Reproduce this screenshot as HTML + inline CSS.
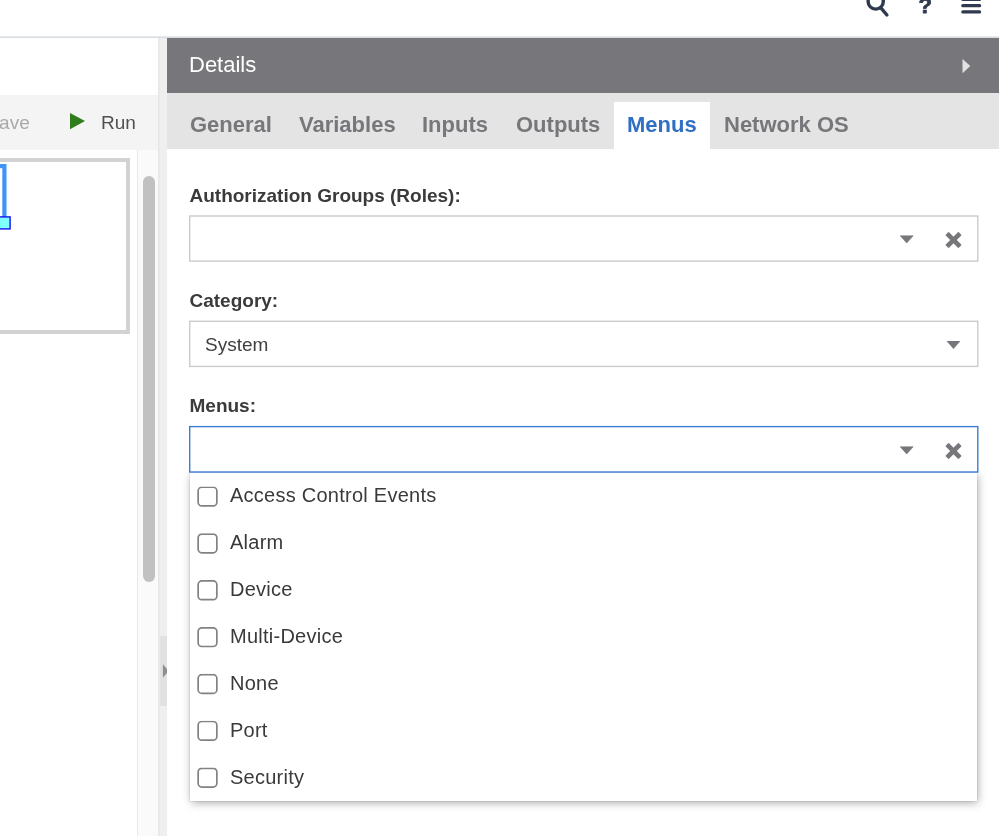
<!DOCTYPE html>
<html><head><meta charset="utf-8">
<style>
html,body{margin:0;padding:0;}
body{width:999px;height:836px;overflow:hidden;background:#fff;font-family:"Liberation Sans",sans-serif;position:relative;color:#404040;}
.abs{position:absolute;}
#topline{left:0;top:36px;width:999px;height:2px;background:linear-gradient(#eef1f3,#cfd6db);}
#toolbar{left:0;top:95px;width:158px;height:55px;background:#f4f4f4;}
#save{left:-13.6px;top:112px;font-size:19px;color:#a9a9a9;line-height:22px;}
#run{left:101px;top:112px;font-size:19px;color:#505050;line-height:22px;}
#outline{left:-10px;top:158px;width:132px;height:168px;border:4px solid #d2d2d2;background:#fff;}
#bluerect{left:-10px;top:164px;width:13px;height:52px;border:3px solid #3f97fb;border-bottom:none;}
#handle{left:-3px;top:217px;width:13px;height:11px;background:#8ff;border:1px solid #1433e6;}
#lane{left:137px;top:150px;width:21px;height:686px;background:#fafafa;border-left:1px solid #e9e9e9;box-sizing:border-box;}
#thumb{left:143px;top:176px;width:11.5px;height:406px;border-radius:6px;background:#c1c1c1;}
#split{left:158px;top:38px;width:9px;height:798px;background:#efefef;box-shadow:inset 1.4px 0 0 #e6e6e6;}
#splith{left:160px;top:635.8px;width:7px;height:69.8px;background:#e1e1e1;}
#hdr{left:167px;top:38px;width:832px;height:55px;background:#77767a;}
#hdrt{left:189px;top:52px;font-size:22px;color:#fff;line-height:26px;}
#tabs{left:167px;top:93px;width:832px;height:56px;background:#e4e4e4;}
.tab{position:absolute;top:111px;font-size:22px;font-weight:bold;color:#77767a;line-height:28px;white-space:nowrap;}
#acttab{left:614px;top:102px;width:96px;height:47px;background:#fff;}
.lbl{position:absolute;left:189.5px;transform:translateY(-0.5px);font-size:19px;font-weight:bold;color:#3a3a3a;line-height:22px;white-space:nowrap;}
.box{position:absolute;left:189px;width:789px;height:47px;box-sizing:border-box;border:1px solid #cfcfcf;background:#fff;}
#dd{left:189.75px;top:472.6px;width:787.6px;height:328.4px;background:#fff;box-shadow:0 0 0 .7px rgba(0,0,0,.08),1.3px 1.5px 9px rgba(0,0,0,.36);}
.it{position:absolute;left:230px;font-size:20px;letter-spacing:.25px;color:#3a3a3a;line-height:24px;white-space:nowrap;}
</style></head><body><div id="wrap" style="position:absolute;left:0;top:0;width:999px;height:836px;will-change:transform;">
<div class="abs" id="topline"></div>
<svg class="abs" style="left:860px;top:0" width="139" height="24" viewBox="860 0 139 24">
 <circle cx="875.7" cy="1.5" r="7.6" fill="none" stroke="#2f3a4e" stroke-width="3.4"/>
 <line x1="881.3" y1="8.3" x2="886.9" y2="15" stroke="#2f3a4e" stroke-width="3.4" stroke-linecap="round"/>
 <text x="918.4" y="13" font-family="Liberation Sans, sans-serif" font-size="22" font-weight="bold" fill="#2f3a4e" stroke="#2f3a4e" stroke-width="0.8" stroke-linejoin="round">?</text>
 <rect x="961.2" y="-2.3" width="20" height="3.3" rx="1.6" fill="#2f3a4e"/>
 <rect x="961.2" y="4" width="20" height="3.3" rx="1.6" fill="#2f3a4e"/>
 <rect x="961.2" y="10.2" width="20" height="3.4" rx="1.7" fill="#2f3a4e"/>
</svg>

<div class="abs" id="toolbar"></div>
<div class="abs" id="save">Save</div>
<svg class="abs" style="left:69px;top:112px" width="18" height="18"><polygon points="1,1 16,9 1,17.3" fill="#2f7d1c"/></svg>
<div class="abs" id="run">Run</div>
<div class="abs" id="lane"></div>
<div class="abs" id="outline"></div>
<svg class="abs" style="left:0;top:160px" width="20" height="75"><rect x="-10" y="6.1" width="14.4" height="60" fill="none" stroke="#3e95f7" stroke-width="4.2"/><rect x="-5" y="56.9" width="15.1" height="12" fill="#80ffff" stroke="#1212ee" stroke-width="1.4"/></svg>
<div class="abs" id="thumb"></div>
<div class="abs" id="split"></div>
<div class="abs" id="splith"></div>
<svg class="abs" style="left:160px;top:663px" width="7" height="16"><polygon points="2.9,1.3 8.6,8 2.9,14.8" fill="#8e8e8e"/></svg>

<div class="abs" id="hdr"></div>
<div class="abs" id="hdrt">Details</div>
<svg class="abs" style="left:960px;top:57px" width="12" height="18"><polygon points="2.5,2 10.3,9 2.5,16.3" fill="#e2e2e2"/></svg>
<div class="abs" id="tabs"></div>
<div class="abs" id="acttab"></div>
<div class="tab" style="left:190px">General</div>
<div class="tab" style="left:299px">Variables</div>
<div class="tab" style="left:422px">Inputs</div>
<div class="tab" style="left:516px">Outputs</div>
<div class="tab" style="left:627px;color:#2f6fc4">Menus</div>
<div class="tab" style="left:724px">Network OS</div>

<div class="lbl" style="top:185px">Authorization Groups (Roles):</div>
<div class="abs" id="dd"></div>
<svg class="abs" style="left:180px;top:210px" width="810" height="270"><rect x="9.7" y="6" width="788.1" height="45.1" fill="#fff" stroke="#cbcbcb" stroke-width="1.4"/><rect x="9.7" y="111.3" width="788.1" height="45.1" fill="#fff" stroke="#cbcbcb" stroke-width="1.4"/><rect x="9.7" y="216.6" width="788.1" height="45.4" fill="#fff" stroke="#3b7dcf" stroke-width="1.4"/></svg>
<div class="lbl" style="top:289.5px">Category:</div>

<div class="abs" style="left:205px;top:333px;font-size:19px;line-height:24px;color:#404040">System</div>
<div class="lbl" style="top:395px">Menus:</div>


<svg class="abs" style="left:895px;top:228px" width="72" height="24"><path d="M5.2,7.8 L18.2,7.8 L11.7,15 Z" fill="#77767a" stroke="#77767a" stroke-width="0.6" stroke-linejoin="round"/><g transform="translate(58.5,12)" fill="#77767a"><rect x="-9.3" y="-2.4" width="18.6" height="4.8" rx="1" transform="rotate(45)"/><rect x="-9.3" y="-2.4" width="18.6" height="4.8" rx="1" transform="rotate(-45)"/></g></svg>
<svg class="abs" style="left:940px;top:333px" width="30" height="24"><polygon points="6.5,8 20.4,8 13.5,16" fill="#77767a"/></svg>
<svg class="abs" style="left:895px;top:439px" width="72" height="24"><path d="M5.2,7.8 L18.2,7.8 L11.7,15 Z" fill="#77767a" stroke="#77767a" stroke-width="0.6" stroke-linejoin="round"/><g transform="translate(58.5,12)" fill="#77767a"><rect x="-9.3" y="-2.4" width="18.6" height="4.8" rx="1" transform="rotate(45)"/><rect x="-9.3" y="-2.4" width="18.6" height="4.8" rx="1" transform="rotate(-45)"/></g></svg>

<svg class="abs" style="left:195px;top:480px;transform:translateY(6.40px)" width="25" height="25"><rect x="3.15" y="0.85" width="18.7" height="18.7" rx="3.7" fill="#fff" stroke="#828282" stroke-width="1.7"/></svg><div class="it" style="top:483px">Access Control Events</div>
<svg class="abs" style="left:195px;top:480px;transform:translateY(53.25px)" width="25" height="25"><rect x="3.15" y="0.85" width="18.7" height="18.7" rx="3.7" fill="#fff" stroke="#828282" stroke-width="1.7"/></svg><div class="it" style="top:530px">Alarm</div>
<svg class="abs" style="left:195px;top:480px;transform:translateY(100.10px)" width="25" height="25"><rect x="3.15" y="0.85" width="18.7" height="18.7" rx="3.7" fill="#fff" stroke="#828282" stroke-width="1.7"/></svg><div class="it" style="top:577px">Device</div>
<svg class="abs" style="left:195px;top:480px;transform:translateY(146.95px)" width="25" height="25"><rect x="3.15" y="0.85" width="18.7" height="18.7" rx="3.7" fill="#fff" stroke="#828282" stroke-width="1.7"/></svg><div class="it" style="top:624px">Multi-Device</div>
<svg class="abs" style="left:195px;top:480px;transform:translateY(193.80px)" width="25" height="25"><rect x="3.15" y="0.85" width="18.7" height="18.7" rx="3.7" fill="#fff" stroke="#828282" stroke-width="1.7"/></svg><div class="it" style="top:671px">None</div>
<svg class="abs" style="left:195px;top:480px;transform:translateY(240.65px)" width="25" height="25"><rect x="3.15" y="0.85" width="18.7" height="18.7" rx="3.7" fill="#fff" stroke="#828282" stroke-width="1.7"/></svg><div class="it" style="top:718px">Port</div>
<svg class="abs" style="left:195px;top:480px;transform:translateY(287.50px)" width="25" height="25"><rect x="3.15" y="0.85" width="18.7" height="18.7" rx="3.7" fill="#fff" stroke="#828282" stroke-width="1.7"/></svg><div class="it" style="top:765px">Security</div>
</div></body></html>
